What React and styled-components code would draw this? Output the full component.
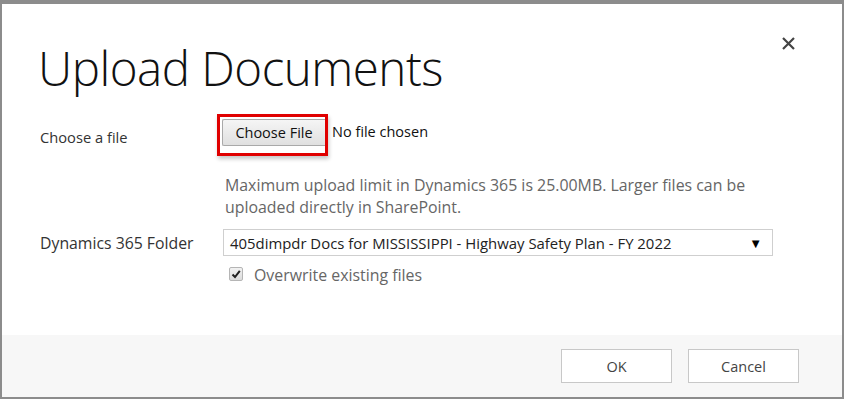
import React from "react";
import styled, { createGlobalStyle } from "styled-components";

const Global = createGlobalStyle`
  html, body { margin: 0; padding: 0; background: #fff; }
  body { font-family: "Open Sans", "Noto Sans", sans-serif; }
  * { box-sizing: border-box; }
`;

const Frame = styled.div`
  width: 844px;
  height: 399px;
  display: flex;
  flex-direction: column;
  border-top: 4px solid #8c8c8c;
  border-left: 2px solid #8c8c8c;
  border-right: 2px solid #8c8c8c;
  border-bottom: 2px solid #8c8c8c;
  background: #fff;
`;

const Body = styled.div`
  flex: 1;
  padding: 0 0 0 36px;
`;

const Header = styled.div`
  display: flex;
  justify-content: space-between;
  align-items: flex-start;
  height: 108px;
`;

const Title = styled.h1`
  margin: 34px 0 0 0;
  font-family: "Open Sans", sans-serif;
  font-weight: 300;
  font-size: 47.5px;
  line-height: 60px;
  color: #111;
  letter-spacing: -0.5px;
`;

const Close = styled.button`
  margin: 29px 44px 0 0;
  width: 20px;
  height: 20px;
  padding: 0;
  border: none;
  background: none;
  display: flex;
  align-items: center;
  justify-content: center;
`;

const Row = styled.div`
  display: grid;
  grid-template-columns: 185px 1fr;
  align-items: ${(p) => p.$align || "center"};
  margin-top: ${(p) => p.$mt || 0}px;
`;

const Label = styled.div`
  font-size: ${(p) => p.$size || 14.7}px;
  line-height: 20px;
  color: #333;
  padding-left: 2px;
  padding-top: ${(p) => p.$pt || 0}px;
`;

const FileLine = styled.div`
  display: flex;
  align-items: flex-start;
  gap: 4px;
  margin-left: -6px;
  padding-top: 2px;
`;

const RedBox = styled.span`
  display: inline-flex;
  width: 111px;
  height: 42px;
  border: 3px solid #e00000;
  padding: 2px 0 0 2px;
  box-shadow: 1px 3px 4px rgba(0, 0, 0, 0.22);
`;

const FileButton = styled.span`
  display: inline-flex;
  align-items: center;
  justify-content: center;
  width: 103px;
  height: 27px;
  font-family: "Open Sans", sans-serif;
  font-size: 14.5px;
  color: #111;
  background: linear-gradient(#f5f5f5, #e0e0e0);
  border: 1px solid #a9a9a9;
  border-right: none;
  border-radius: 2px 0 0 2px;
`;

const NoFile = styled.span`
  font-family: "Open Sans", sans-serif;
  font-size: 14.5px;
  line-height: 20px;
  color: #111;
  padding-top: 8px;
`;

const Help = styled.p`
  margin: 18px 0 0 0;
  font-size: 15.9px;
  line-height: 22px;
  color: #666;
  padding-left: 2px;
  width: 560px;
`;

const Select = styled.div`
  width: 550px;
  height: 27px;
  border: 1px solid #cfcfcf;
  display: flex;
  align-items: center;
  justify-content: space-between;
  padding: 0 10px 0 6px;
  font-size: 14.9px;
  color: #222;
`;

const Arrow = styled.span`
  font-size: 13px;
  color: #000;
`;

const CheckRow = styled.label`
  display: flex;
  align-items: center;
  gap: 11px;
  margin-top: 8px;
  padding-left: 6px;
  font-size: 15.9px;
  line-height: 22px;
  color: #666;
`;

const Box = styled.span`
  width: 14px;
  height: 14px;
  margin-top: -3px;
  border: 1px solid #b5b5b5;
  border-radius: 2px;
  background: linear-gradient(#f2f2f2, #dcdcdc);
  display: flex;
  align-items: center;
  justify-content: center;
`;

const Footer = styled.div`
  height: 62px;
  background: #f7f7f7;
  display: flex;
  justify-content: flex-end;
  align-items: flex-start;
  gap: 16px;
  padding: 14px 43px 0 0;
`;

const Btn = styled.button`
  width: 111px;
  height: 34px;
  border: 1px solid #c8c8c8;
  background: #fff;
  font-family: "Open Sans", sans-serif;
  font-size: 14.5px;
  color: #444;
  padding: 0;
`;

export default function App() {
  return (
    <>
      <Global />
      <Frame>
        <Body>
          <Header>
            <Title>Upload Documents</Title>
            <Close aria-label="Close">
              <svg width="15" height="15" viewBox="0 0 15 15">
                <path d="M2 2 L13 13 M13 2 L2 13" stroke="#444" strokeWidth="2.2" />
              </svg>
            </Close>
          </Header>
          <Row $align="start">
            <Label $pt={15}>Choose a file</Label>
            <div>
              <FileLine>
                <RedBox>
                  <FileButton>Choose File</FileButton>
                </RedBox>
                <NoFile>No file chosen</NoFile>
              </FileLine>
              <Help>
                Maximum upload limit in Dynamics 365 is 25.00MB. Larger files can be
                uploaded directly in SharePoint.
              </Help>
            </div>
          </Row>
          <Row $mt={11}>
            <Label $size={15.8}>Dynamics 365 Folder</Label>
            <Select>
              <span>405dimpdr Docs for MISSISSIPPI - Highway Safety Plan - FY 2022</span>
              <Arrow>▼</Arrow>
            </Select>
          </Row>
          <Row>
            <span />
            <CheckRow>
              <Box>
                <svg width="10" height="10" viewBox="0 0 10 10">
                  <path d="M1.5 5.5 L4 8 L8.8 1.8" stroke="#222" strokeWidth="2" fill="none" />
                </svg>
              </Box>
              Overwrite existing files
            </CheckRow>
          </Row>
        </Body>
        <Footer>
          <Btn>OK</Btn>
          <Btn>Cancel</Btn>
        </Footer>
      </Frame>
    </>
  );
}
